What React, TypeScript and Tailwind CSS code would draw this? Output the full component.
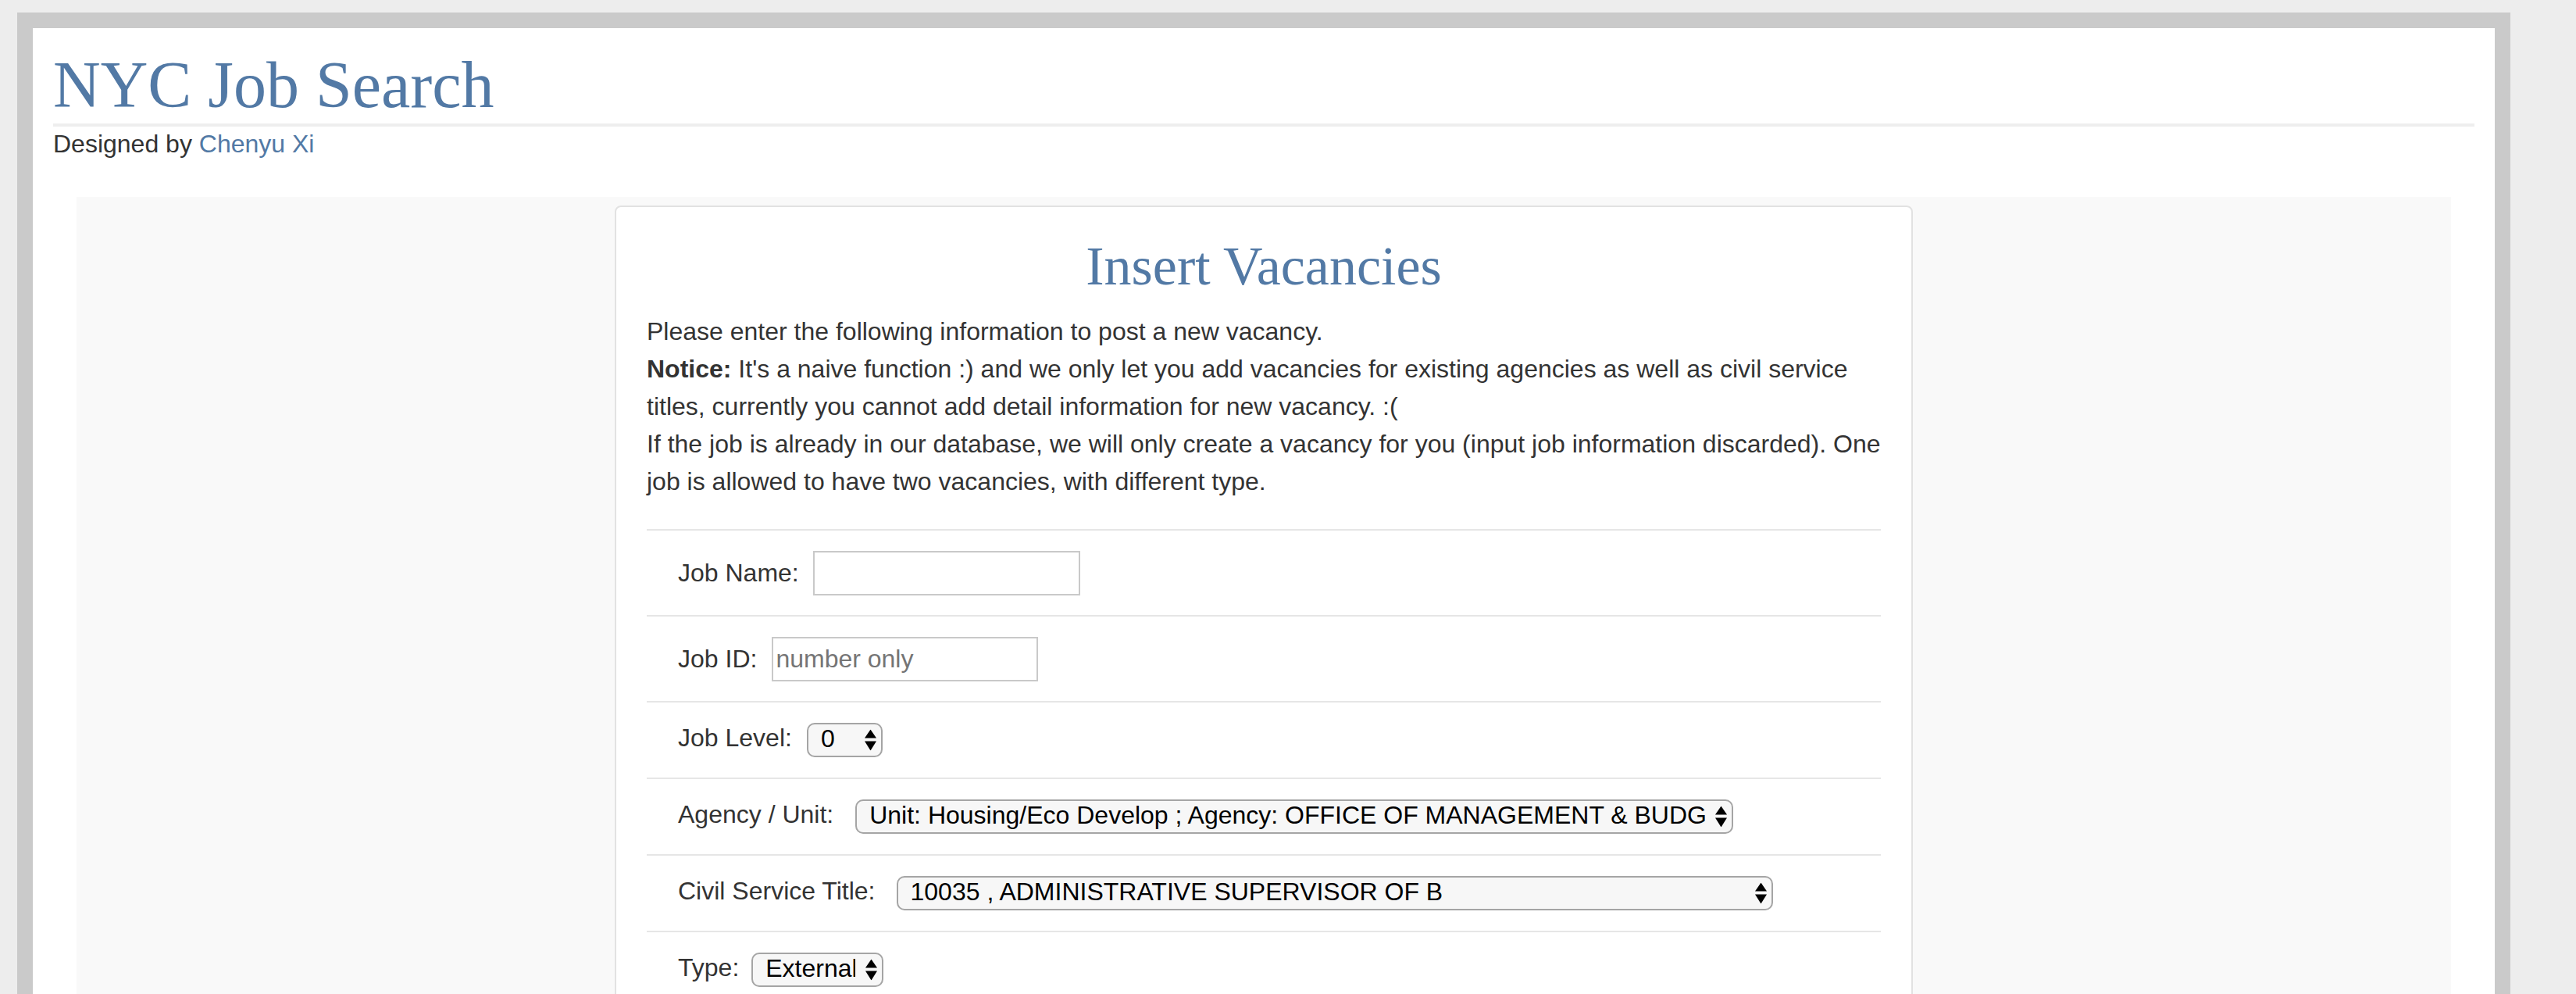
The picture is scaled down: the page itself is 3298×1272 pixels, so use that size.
import React from "react";

const sans = { fontFamily: '"Liberation Sans", Arial, Helvetica, sans-serif' };

function Arrows() {
  return (
    <svg
      className="pointer-events-none absolute right-[8px] top-1/2 -translate-y-1/2"
      width="15"
      height="27"
      viewBox="0 0 15 27"
      aria-hidden="true"
    >
      <polygon points="7.5,0 15,11 0,11" fill="#000" />
      <polygon points="0,15 15,15 7.5,27" fill="#000" />
    </svg>
  );
}

function FakeSelect({ value, width }: { value: string; width: string }) {
  return (
    <div className={`relative inline-block ${width}`}>
      <select
        defaultValue={value}
        className="block h-[44px] w-full appearance-none overflow-hidden whitespace-nowrap rounded-[10px] border-2 border-[#a5a5a5] bg-[#f7f7f7] pb-[4px] pl-[16px] pr-[34px] pt-0 text-[32px] leading-[36px] text-black outline-none"
        style={sans}
      >
        <option value={value}>{value}</option>
      </select>
      <Arrows />
    </div>
  );
}

function Row({
  children,
  tall,
}: {
  children: React.ReactNode;
  tall?: boolean;
}) {
  return (
    <div
      className={`flex items-center border-t-2 border-[#e6e6e6] py-[24px] pl-[40px] ${
        tall ? "h-[110px]" : "h-[98px]"
      }`}
    >
      {children}
    </div>
  );
}

export default function App() {
  return (
    <div className="min-h-screen bg-[#ededed] pb-[40px] pt-[16px]" style={sans}>
      <div className="ml-[22px] w-[3192px] border-[20px] border-[#cacaca] bg-white px-[26px] pb-[60px] pt-[27px]">
        <h1
          className="text-[84px] font-normal leading-[92px] text-[#5279a5]"
          style={{ fontFamily: '"Liberation Serif", "Times New Roman", serif' }}
        >
          NYC Job Search
        </h1>
        <div className="mt-[3px] h-[4px] bg-[#eeeeee]" />
        <p className="mt-[3px] text-[32px] leading-[38px] text-[#333333]">
          Designed by <a className="text-[#5279a5]">Chenyu Xi</a>
        </p>

        <div className="mx-[30px] mt-[49px] bg-[#f9f9f9] pb-[80px] pt-[11px]">
          <div className="mx-auto w-[1662px] rounded-[8px] border-2 border-[#e2e2e2] bg-white px-[39px] pb-[40px] pt-[37px] text-[#333333]">
            <h2
              className="mb-[21px] text-center text-[70px] font-normal leading-[77px] text-[#5279a5]"
              style={{ fontFamily: '"Liberation Serif", "Times New Roman", serif' }}
            >
              Insert Vacancies
            </h2>
            <p className="mr-[-4px] text-[32px] leading-[48px]">
              Please enter the following information to post a new vacancy.
              <br />
              <b>Notice:</b> It's a naive function :) and we only let you add
              vacancies for existing agencies as well as civil service titles,
              currently you cannot add detail information for new vacancy. :(
              <br />
              If the job is already in our database, we will only create a
              vacancy for you (input job information discarded). One job is
              allowed to have two vacancies, with different type.
            </p>

            <div className="mt-[37px] text-[32px] text-[#333333]">
              <Row tall>
                <label className="mr-[18px]">Job Name:</label>
                <input
                  type="text"
                  className="h-[57px] w-[342px] border-2 border-[#c9c9c9] bg-white px-[3px] text-[32px] outline-none"
                  style={sans}
                />
              </Row>
              <Row tall>
                <label className="mr-[19px]">Job ID:</label>
                <input
                  type="text"
                  placeholder="number only"
                  className="h-[57px] w-[341px] border-2 border-[#c9c9c9] bg-white px-[3px] text-[32px] outline-none placeholder:text-[#757575]"
                  style={sans}
                />
              </Row>
              <Row>
                <label className="mr-[19px] pb-[6px]">Job Level:</label>
                <FakeSelect value="0" width="w-[97px]" />
              </Row>
              <Row>
                <label className="mr-[28px] pb-[6px]">Agency / Unit:</label>
                <FakeSelect
                  value="Unit: Housing/Eco Develop ; Agency: OFFICE OF MANAGEMENT & BUDG"
                  width="w-[1124px]"
                />
              </Row>
              <Row>
                <label className="mr-[27px] pb-[6px]">Civil Service Title:</label>
                <FakeSelect
                  value="10035 , ADMINISTRATIVE SUPERVISOR OF B"
                  width="w-[1122px]"
                />
              </Row>
              <Row>
                <label className="mr-[16px] pb-[6px]">Type:</label>
                <FakeSelect value="External" width="w-[169px]" />
              </Row>
              <div className="flex items-center border-t-2 border-[#e6e6e6] py-[24px] pl-[40px]">
                <button className="h-[56px] rounded-[8px] border-2 border-[#2e6da4] bg-[#337ab7] px-[24px] text-[32px] text-white">
                  Submit
                </button>
              </div>
            </div>
          </div>
        </div>
      </div>
    </div>
  );
}
